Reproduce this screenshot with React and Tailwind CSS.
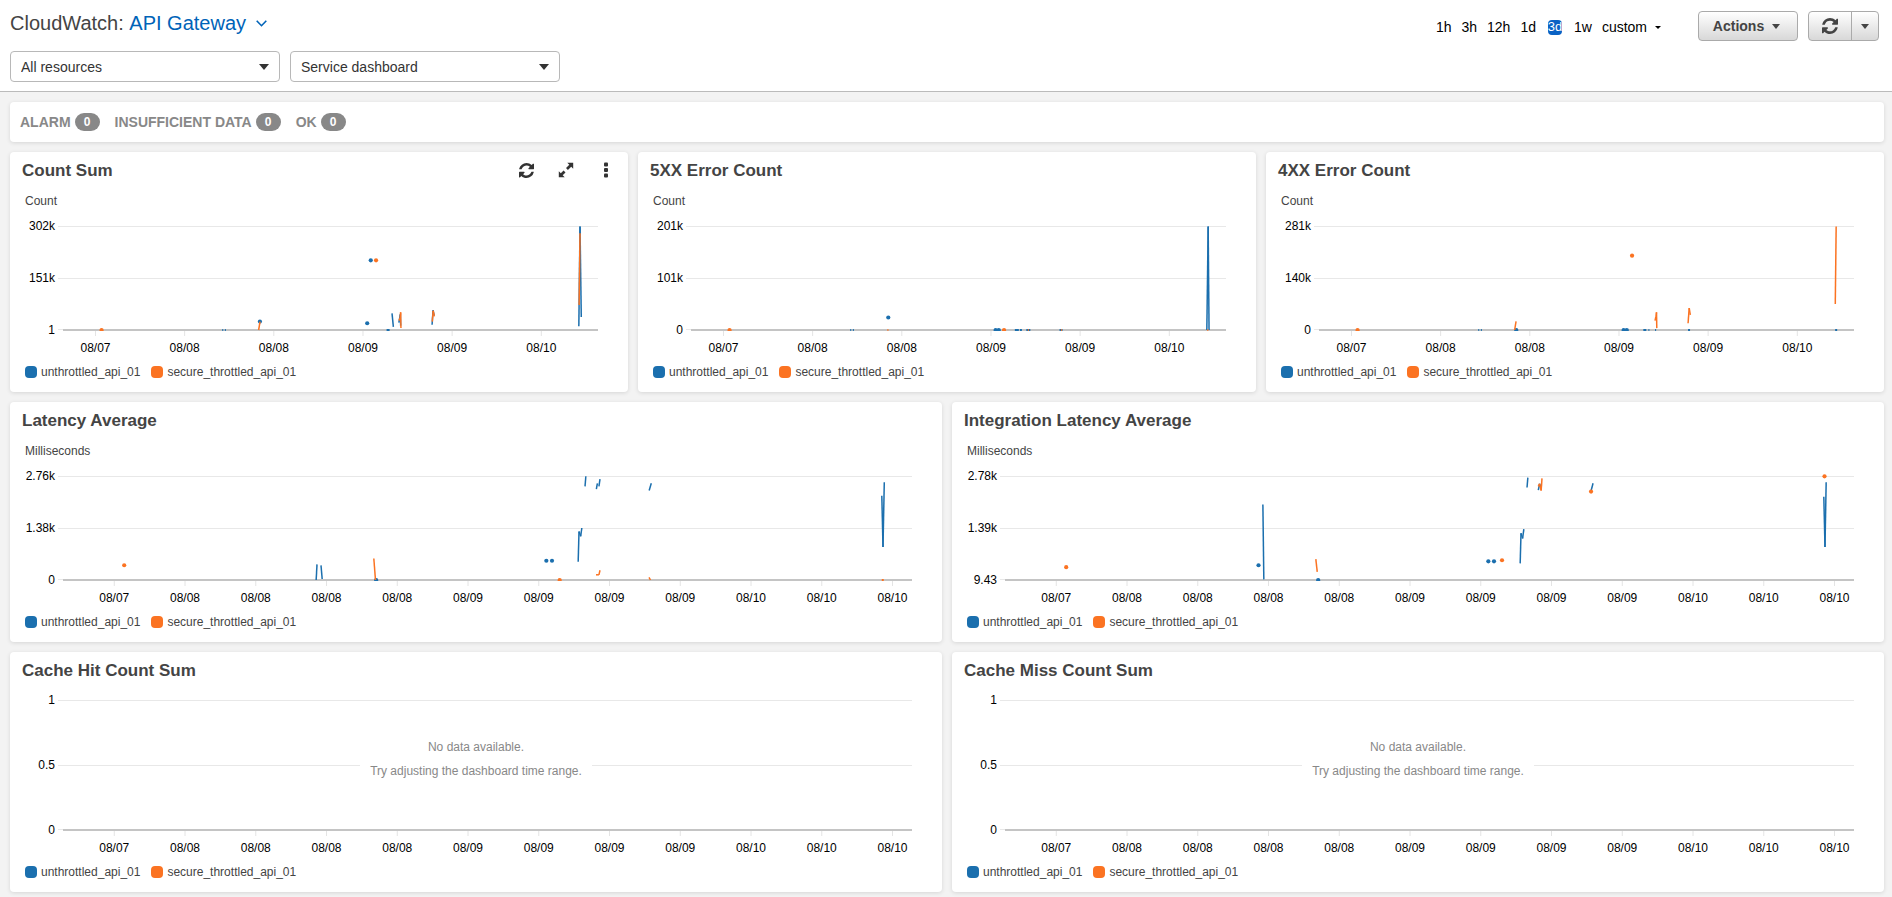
import React from "react";

const colors = { blue: "#1b6fae", orange: "#fb7322" };
const HOURS = 72;
const pct = (t) => `${(t / HOURS) * 100}%`;

const narrowTicks = [
  [4.37, "08/07"], [16.37, "08/08"], [28.37, "08/08"],
  [40.37, "08/09"], [52.37, "08/09"], [64.37, "08/10"],
];
const wideTicks = [
  [4.35, "08/07"], [10.35, "08/08"], [16.35, "08/08"], [22.35, "08/08"],
  [28.35, "08/08"], [34.35, "08/09"], [40.35, "08/09"], [46.35, "08/09"],
  [52.35, "08/09"], [58.35, "08/10"], [64.35, "08/10"], [70.35, "08/10"],
];

/* Times are hours from the start of the range, values are percent of the axis. */
const countSum = [
  { c: "orange", dots: [[5.19, 0]] },
  { c: "blue", marks: [[21.5, 1], [21.85, 1], [43.75, 3]] },
  { c: "blue", dots: [[26.5, 8.1], [40.94, 6.5], [41.42, 67]] },
  { c: "orange", dots: [[42.13, 67]] },
  { c: "orange", path: [[26.33, 0], [26.52, 8]] },
  { c: "blue", path: [[44.28, 16], [44.46, 3]] },
  { c: "blue", path: [[45.2, 7], [45.4, 15], [45.44, 4]] },
  { c: "orange", path: [[45.22, 9], [45.38, 12], [45.44, 17], [45.48, 2]] },
  { c: "blue", path: [[49.67, 5], [49.8, 19], [49.95, 14]] },
  { c: "orange", path: [[49.7, 8], [49.82, 18.5], [49.97, 13]] },
  { c: "blue", path: [[69.42, 3.5], [69.58, 99.5], [69.75, 12.5]] },
  { c: "orange", path: [[69.46, 24], [69.58, 93]] },
];
const error5xx = [
  { c: "orange", dots: [[5.19, 0]], marks: [[26.5, 1]] },
  { c: "blue", dots: [[26.55, 12], [41.0, 0], [41.42, 0]] },
  { c: "blue", marks: [[21.5, 1], [21.85, 1], [43.85, 4], [44.4, 2], [45.4, 4], [49.8, 3]] },
  { c: "orange", dots: [[42.13, 0]], marks: [[45.4, 1], [49.85, 1]] },
  { c: "blue", path: [[69.42, 0], [69.6, 99.5], [69.72, 0]] },
  { c: "orange", marks: [[69.55, 1]] },
];
const error4xx = [
  { c: "orange", dots: [[5.19, 0], [42.13, 71.5]] },
  { c: "blue", dots: [[26.55, 0], [41.0, 0], [41.42, 0]] },
  { c: "blue", marks: [[21.5, 1], [21.85, 1], [43.85, 3], [44.4, 1], [45.3, 1], [49.8, 2], [69.6, 2]] },
  { c: "orange", path: [[26.33, 0], [26.52, 8.4]] },
  { c: "orange", path: [[45.22, 9], [45.35, 13], [45.42, 17], [45.46, 1.8]] },
  { c: "orange", path: [[49.67, 6.5], [49.82, 21], [49.97, 14.5]] },
  { c: "orange", path: [[69.48, 25], [69.6, 99.5]] },
];
const latency = [
  { c: "orange", dots: [[5.19, 14.2], [42.12, 0]] },
  { c: "blue", path: [[21.47, 0], [21.54, 15]] },
  { c: "blue", path: [[21.88, 14], [21.98, 1]] },
  { c: "blue", dots: [[26.56, 0], [40.99, 18.5], [41.47, 18.5]] },
  { c: "orange", path: [[26.36, 20.7], [26.5, 0]] },
  { c: "blue", path: [[43.69, 17.5], [43.76, 46.6], [43.9, 42], [44.0, 50]] },
  { c: "blue", path: [[44.27, 90], [44.34, 99.7]] },
  { c: "blue", path: [[45.23, 87.4], [45.32, 93]] },
  { c: "blue", path: [[45.45, 90], [45.54, 97]] },
  { c: "orange", path: [[45.2, 5], [45.45, 5], [45.54, 9.4]] },
  { c: "blue", path: [[49.71, 86], [49.89, 93]] },
  { c: "orange", path: [[49.7, 2.6], [49.82, 0]] },
  { c: "blue", path: [[69.44, 81], [69.54, 31.7], [69.65, 93.9]] },
  { c: "orange", marks: [[69.52, 2]] },
];
const integration = [
  { c: "orange", dots: [[5.19, 12.3], [42.15, 19]] },
  { c: "blue", dots: [[21.5, 14.2], [26.56, 0], [40.99, 18], [41.47, 18]] },
  { c: "blue", path: [[21.87, 72.5], [21.95, 0.6]] },
  { c: "orange", path: [[26.36, 20], [26.48, 7.8]] },
  { c: "blue", path: [[43.69, 16], [43.76, 45], [43.9, 40], [44.0, 49]] },
  { c: "blue", path: [[44.27, 89], [44.34, 98.4]] },
  { c: "blue", path: [[45.23, 86.4], [45.33, 92.5], [45.47, 88]] },
  { c: "orange", path: [[45.23, 90], [45.33, 92.5], [45.47, 86], [45.54, 97.7]] },
  { c: "blue", path: [[49.71, 86], [49.87, 93]] },
  { c: "orange", dots: [[49.7, 85], [69.5, 99.7]] },
  { c: "blue", path: [[69.44, 80], [69.54, 31.7], [69.64, 94]] },
];

function Series({ s, y }) {
  const fill = colors[s.c];
  return (
    <g fill={fill} stroke="none">
      {(s.path || []).slice(1).map(([t, v], i) => (
        <line
          key={`l${i}`}
          x1={pct(s.path[i][0])} y1={y(s.path[i][1])}
          x2={pct(t)} y2={y(v)}
          stroke={fill} strokeWidth="1.5"
        />
      ))}
      {(s.dots || []).map(([t, v], i) => (
        <circle key={`d${i}`} cx={pct(t)} cy={y(v)} r="2.1" />
      ))}
      {(s.marks || []).map(([t, w], i) => (
        <line key={`m${i}`} x1={pct(t)} x2={pct(t)} y1={y(0) - 1} y2={y(0) + 1} stroke={fill} strokeWidth={w} />
      ))}
    </g>
  );
}

function Plot({ labels, ticks, series = [], height, name }) {
  const top = 10;
  const bottom = top + height;
  const mid = top + Math.round(height / 2);
  const y = (v) => bottom - (v / 100) * height;
  return (
    <div className="relative pr-[30px] pl-[53px]">
      <svg
        role="img"
        aria-label={name}
        className="block w-full overflow-visible text-xs"
        height={height + 40}
      >
        {[top, mid].map((gy) => (
          <line key={gy} x1="-5" x2="100%" y1={gy + 0.5} y2={gy + 0.5} stroke="#e8e8e8" />
        ))}
        <line x1="-5" x2="0" y1={bottom - 0.5} y2={bottom - 0.5} stroke="#e8e8e8" />
        <line x1="0" x2="100%" y1={bottom} y2={bottom} stroke="#c4c4c4" strokeWidth="2" />
        {[top, mid, bottom].map((ly, i) => (
          <text key={ly} x="-8" y={ly + 4} textAnchor="end" fill="#000">{labels[i]}</text>
        ))}
        {ticks.map(([t, text]) => (
          <g key={t}>
            <line x1={pct(t)} x2={pct(t)} y1={bottom + 1} y2={bottom + 6} stroke="#e4e4e4" />
            <text x={pct(t)} y={bottom + 22} textAnchor="middle" fill="#000">{text}</text>
          </g>
        ))}
        <svg width="100%" height={bottom + 1}>
          {series.map((s, i) => <Series key={i} s={s} y={y} />)}
        </svg>
      </svg>
      {series.length === 0 && (
        <div className="pointer-events-none absolute inset-x-0 top-[45px] flex justify-center">
          <p className="bg-white px-[10px] text-center text-xs leading-6 text-[#888]">
            No data available.
            <br />
            Try adjusting the dashboard time range.
          </p>
        </div>
      )}
    </div>
  );
}

function Legend() {
  return (
    <ul className="flex gap-[11px] px-[15px] text-xs leading-4 text-[#444]">
      <li className="flex items-center gap-1">
        <span className="size-3 rounded bg-[#1b6fae]" />
        unthrottled_api_01
      </li>
      <li className="flex items-center gap-1">
        <span className="size-3 rounded bg-[#fb7322]" />
        secure_throttled_api_01
      </li>
    </ul>
  );
}

function RefreshIcon({ className }) {
  return (
    <svg viewBox="0 0 1536 1536" fill="currentColor" className={className} aria-hidden="true">
      <path d="M1511 928q0 5-1 7-64 268-268 434.500T764 1536q-146 0-282.500-55T238 1324l-129 129q-19 19-45 19t-45-19-19-45V960q0-26 19-45t45-19h448q26 0 45 19t19 45-19 45l-137 137q71 66 161 102t187 36q134 0 250-65t186-179q11-17 53-117 8-23 30-23h192q13 0 22.500 9.500t9.500 22.500zm25-800v448q0 26-19 45t-45 19h-448q-26 0-45-19t-19-45 19-45l138-138Q969 256 768 256q-134 0-250 65T332 500q-11 17-53 117-8 23-30 23H50q-13 0-22.500-9.500T18 608v-7q65-268 270-434.500T768 0q146 0 284 55.500T1297 212l130-129q19-19 45-19t45 19 19 45z" />
    </svg>
  );
}

function ExpandIcon() {
  return (
    <svg viewBox="0 0 16 16" className="size-4" fill="currentColor" aria-hidden="true">
      <path d="M9.300 .8H15.200V6.700L13.200 4.700L9.900 8L8 6.100L11.300 2.800zM6.700 15.200H.8V9.300L2.800 11.300L5.600 8.500L7.500 10.400L4.700 13.200z" />
    </svg>
  );
}

function DotsIcon() {
  return (
    <svg viewBox="0 0 4 16" className="h-4 w-1" fill="currentColor" aria-hidden="true">
      <rect y="0.500" width="4" height="4" rx="1" />
      <rect y="6" width="4" height="4" rx="1" />
      <rect y="11.500" width="4" height="4" rx="1" />
    </svg>
  );
}

function Caret({ className }) {
  return (
    <svg viewBox="0 0 10 5" className={className} fill="currentColor" preserveAspectRatio="none" aria-hidden="true">
      <path d="M0 0h10L5 5z" />
    </svg>
  );
}

function Card({ title, unit, tools, ...plot }) {
  return (
    <section className="min-w-0 rounded bg-white pb-3 shadow-[0_1px_4px_rgba(0,0,0,0.12)]">
      <header className="flex h-9 items-center justify-between pr-[14px] pl-3">
        <h2 className="pt-[2px] text-[17px] leading-6 font-bold text-[#444]">{title}</h2>
        {tools && (
          <div className="flex items-center gap-6 text-[#333]">
            <button type="button" aria-label="Refresh" className="flex w-4 justify-center"><RefreshIcon className="size-[15px]" /></button>
            <button type="button" aria-label="Enlarge" className="flex w-4 justify-center"><ExpandIcon /></button>
            <button type="button" aria-label="Widget actions" className="flex w-4 justify-center"><DotsIcon /></button>
          </div>
        )}
      </header>
      {unit && <p className="h-7 px-[15px] pt-[3px] text-xs leading-5 text-[#444]">{unit}</p>}
      <div className={unit ? "" : "pt-[2px]"}>
        <Plot name={title} height={unit ? 104 : 130} {...plot} />
      </div>
      <div className="pt-1"><Legend /></div>
    </section>
  );
}

function Picker({ label, value }) {
  return (
    <div className="relative w-[270px]">
      <select aria-label={label} className="block h-[31px] w-full appearance-none rounded border border-[#b8b8b8] bg-white pr-8 pl-[10px] text-sm text-[#333]">
        <option>{value}</option>
      </select>
      <Caret className="pointer-events-none absolute top-[13px] right-[11px] h-[6px] w-[10px] text-[#333]" />
    </div>
  );
}

function Alarm({ label }) {
  return (
    <span className="flex items-center gap-1">
      {label}
      <span className="flex h-[18px] w-[25px] items-center justify-center rounded-full bg-[#888] text-xs text-white">0</span>
    </span>
  );
}

export default function App() {
  return (
    <div className="min-h-screen bg-[#f3f3f3] font-['Liberation_Sans',Arial,sans-serif]">
      <header className="flex justify-between border-b border-[#bbb] bg-white pt-[11px] pr-[13px] pb-[9px] pl-[10px]">
        <div>
          <h1 className="flex h-6 items-center text-xl text-[#444]">
            <span>CloudWatch:&nbsp;</span>
            <button type="button" className="flex items-center gap-[10px] text-[#0063b8]">
              API Gateway
              <svg viewBox="0 0 11 7" className="h-[7px] w-[11px]" fill="none" stroke="currentColor" strokeWidth="1.6" aria-hidden="true">
                <path d="M.7 .7l4.800 5L10.300 .7" />
              </svg>
            </button>
          </h1>
          <div className="mt-4 flex gap-[10px]">
            <Picker label="Resources" value="All resources" />
            <Picker label="Dashboard" value="Service dashboard" />
          </div>
        </div>
        <div className="flex h-[30px] items-center text-sm text-black">
          <div className="mr-[37px] flex items-center gap-[10px] pt-[2px]">
            <button type="button">1h</button>
            <button type="button">3h</button>
            <button type="button">12h</button>
            <button type="button">1d</button>
            <button type="button" className="mx-[2px] flex h-[15px] w-[14px] items-center justify-center overflow-hidden rounded bg-[#0a62c4] text-[13px] text-white">3d</button>
            <button type="button">1w</button>
            <button type="button" className="flex items-center gap-2">
              custom <Caret className="h-[3px] w-[6px]" />
            </button>
          </div>
          <button type="button" className="flex h-[30px] w-[100px] items-center justify-center gap-2 rounded border border-[#aaa] bg-linear-to-b from-white to-[#d8d8d8] pr-[3px] font-bold text-[#444]">
            Actions <Caret className="h-[5px] w-2" />
          </button>
          <div className="ml-[10px] flex h-[30px] rounded border border-[#aaa] bg-linear-to-b from-white to-[#d8d8d8] text-[#444]">
            <button type="button" aria-label="Refresh dashboard" className="flex w-[43px] items-center justify-center border-r border-[#aaa]">
              <RefreshIcon className="size-4" />
            </button>
            <button type="button" aria-label="Refresh options" className="flex w-[26px] items-center justify-center">
              <Caret className="h-[5px] w-2" />
            </button>
          </div>
        </div>
      </header>
      <main className="flex flex-col gap-[10px] pt-[10px] pr-2 pb-[5px] pl-[10px]">
        <div className="flex h-10 items-center gap-[15px] rounded bg-white px-[10px] text-sm font-bold text-[#888] shadow-[0_1px_4px_rgba(0,0,0,0.12)]">
          <Alarm label="ALARM" />
          <Alarm label="INSUFFICIENT DATA" />
          <Alarm label="OK" />
        </div>
        <div className="grid grid-cols-3 gap-[10px]">
          <Card title="Count Sum" unit="Count" tools labels={["302k", "151k", "1"]} ticks={narrowTicks} series={countSum} />
          <Card title="5XX Error Count" unit="Count" labels={["201k", "101k", "0"]} ticks={narrowTicks} series={error5xx} />
          <Card title="4XX Error Count" unit="Count" labels={["281k", "140k", "0"]} ticks={narrowTicks} series={error4xx} />
        </div>
        <div className="grid grid-cols-2 gap-[10px]">
          <Card title="Latency Average" unit="Milliseconds" labels={["2.76k", "1.38k", "0"]} ticks={wideTicks} series={latency} />
          <Card title="Integration Latency Average" unit="Milliseconds" labels={["2.78k", "1.39k", "9.43"]} ticks={wideTicks} series={integration} />
          <Card title="Cache Hit Count Sum" labels={["1", "0.5", "0"]} ticks={wideTicks} />
          <Card title="Cache Miss Count Sum" labels={["1", "0.5", "0"]} ticks={wideTicks} />
        </div>
      </main>
    </div>
  );
}
